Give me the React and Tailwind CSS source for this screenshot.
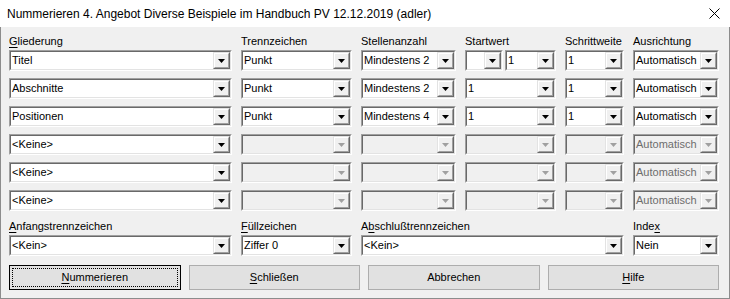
import React from "react";

const font = { fontFamily: '"Liberation Sans", Arial, sans-serif' };

const Arrow = ({ disabled }) => (
  <div className="flex h-[17px] w-[17px] shrink-0 border border-t-[#e3e3e3] border-l-[#e3e3e3] border-b-[#696969] border-r-[#696969]">
    <div className="flex flex-1 items-center justify-center border border-t-white border-l-white border-b-[#a0a0a0] border-r-[#a0a0a0] bg-[#f0f0f0]">
      <svg width="7" height="4" viewBox="0 0 7 4">
        <polygon points="0,0 7,0 3.5,4" fill={disabled ? "#a0a0a0" : "#000"} />
      </svg>
    </div>
  </div>
);

const Combo = ({ className = "", text = "", disabled = false, grayText = false }) => (
  <div
    className={`h-[21px] shrink-0 border border-t-[#a0a0a0] border-l-[#a0a0a0] border-b-white border-r-white ${className}`}
  >
    <div
      className={`flex h-full border border-t-[#696969] border-l-[#696969] border-b-[#e3e3e3] border-r-[#e3e3e3] ${
        disabled ? "bg-[#f0f0f0]" : "bg-white"
      }`}
    >
      <div
        className={`min-w-0 flex-1 truncate pl-[1px] text-[11px] leading-[17px] ${
          grayText ? "text-[#6d6d6d]" : "text-black"
        }`}
      >
        {text}
      </div>
      <Arrow disabled={disabled} />
    </div>
  </div>
);

const Label = ({ className = "", children }) => (
  <div className={`h-[14px] shrink-0 text-[11px] leading-[14px] text-black ${className}`}>{children}</div>
);

const U = ({ children }) => <span className="underline underline-offset-[2px]">{children}</span>;

const rows = [
  { g: "Titel", t: "Punkt", s: "Mindestens 2", split: true, w: "1", a: "Automatisch" },
  { g: "Abschnitte", t: "Punkt", s: "Mindestens 2", start: "1", w: "1", a: "Automatisch" },
  { g: "Positionen", t: "Punkt", s: "Mindestens 4", start: "1", w: "1", a: "Automatisch" },
  { g: "<Keine>", off: true },
  { g: "<Keine>", off: true },
  { g: "<Keine>", off: true },
];

const Button = ({ children, focused }) =>
  focused ? (
    <div className="flex h-[25px] items-center justify-center border border-black bg-[#e1e1e1] p-[2px]">
      <div className="flex h-full w-full items-center justify-center border border-dotted border-black text-[11px]">
        {children}
      </div>
    </div>
  ) : (
    <div className="flex h-[25px] items-center justify-center border border-[#adadad] bg-[#e1e1e1] text-[11px]">
      {children}
    </div>
  );

export default function App() {
  return (
    <div className="h-[299px] w-[730px] overflow-hidden bg-white" style={font}>
      <div className="flex h-[27px] items-center justify-between bg-white pl-[7px] pr-[10px]">
        <div className="text-[12px] text-black">
          Nummerieren 4. Angebot Diverse Beispiele im Handbuch PV 12.12.2019 (adler)
        </div>
        <svg width="11" height="11" viewBox="0 0 11 11">
          <path d="M0.5 0.5 L10.5 10.5 M10.5 0.5 L0.5 10.5" stroke="#000" strokeWidth="1" />
        </svg>
      </div>
      <div className="flex h-[272px] flex-col border-x border-b border-[#8c8c8c] bg-[#f0f0f0] pl-[8px] pr-[10px] pt-[7px]">
        <div className="flex gap-[9px]">
          <Label className="w-[223px]"><U>G</U>liederung</Label>
          <Label className="w-[111px]">Trennzeichen</Label>
          <Label className="w-[95px]">Stellenanzahl</Label>
          <Label className="w-[91px]">Startwert</Label>
          <Label className="w-[59px]">Schrittweite</Label>
          <Label className="w-[86px]">Ausrichtung</Label>
        </div>
        <div className="mt-[2px] flex flex-col gap-[7px]">
          {rows.map((r, i) => (
            <div key={i} className="flex gap-[9px]">
              <Combo className="w-[223px]" text={r.g} />
              <Combo className="w-[111px]" text={r.t} disabled={r.off} />
              <Combo className="w-[95px]" text={r.s} disabled={r.off} />
              {r.split ? (
                <div className="flex w-[91px] gap-[2px]">
                  <Combo className="w-[38px]" text="" />
                  <Combo className="w-[51px]" text="1" />
                </div>
              ) : (
                <Combo className="w-[91px]" text={r.start} disabled={r.off} />
              )}
              <Combo className="w-[59px]" text={r.w} disabled={r.off} />
              <Combo className="w-[86px]" text="Automatisch" disabled={r.off} grayText={r.off} />
            </div>
          ))}
        </div>
        <div className="mt-[8px] flex gap-[9px]">
          <Label className="w-[223px]"><U>A</U>nfangstrennzeichen</Label>
          <Label className="w-[111px]"><U>F</U>üllzeichen</Label>
          <Label className="w-[263px]">A<U>b</U>schlußtrennzeichen</Label>
          <Label className="w-[86px]">Inde<U>x</U></Label>
        </div>
        <div className="mt-[2px] flex gap-[9px]">
          <Combo className="w-[223px]" text="<Kein>" />
          <Combo className="w-[111px]" text="Ziffer 0" />
          <Combo className="w-[263px]" text="<Kein>" />
          <Combo className="w-[86px]" text="Nein" />
        </div>
        <div className="mt-[9px] grid w-[710px] grid-cols-4 gap-[8px]">
          <Button focused><span><U>N</U>ummerieren</span></Button>
          <Button><span><U>S</U>chließen</span></Button>
          <Button>Abbrechen</Button>
          <Button><span><U>H</U>ilfe</span></Button>
        </div>
      </div>
    </div>
  );
}
